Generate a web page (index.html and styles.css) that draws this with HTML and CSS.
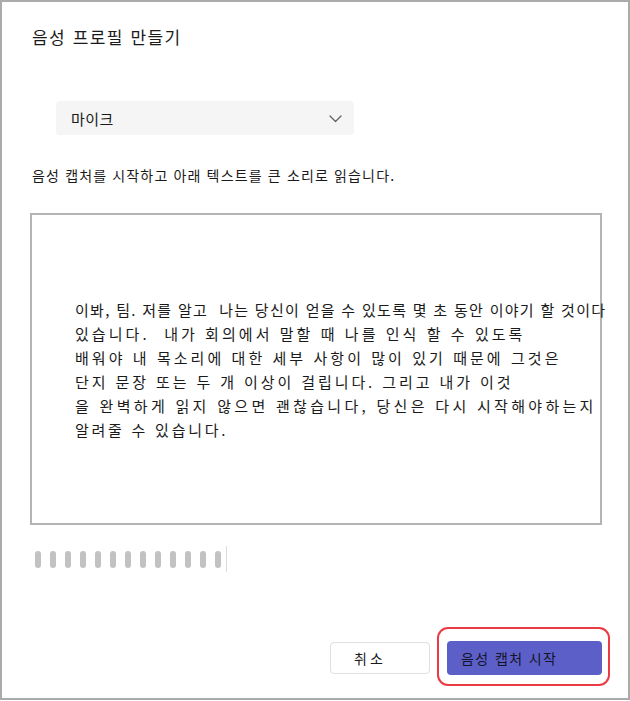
FILE: index.html
```html
<!DOCTYPE html>
<html lang="ko">
<head>
<meta charset="utf-8">
<title>음성 프로필 만들기</title>
<link rel="stylesheet" href="styles.css">
</head>
<body>
<div class="dialog">
  <h1 class="title">음성 프로필 만들기</h1>
  <div class="select">
    <span class="select-label">마이크</span>
    <svg class="chevron" width="13" height="8" viewBox="0 0 13 8"><path d="M1 1l5.5 5.5L12 1" fill="none" stroke="#616161" stroke-width="1.3" stroke-linecap="round" stroke-linejoin="round"/></svg>
  </div>
  <p class="instr">음성 캡처를 시작하고 아래 텍스트를 큰 소리로 읽습니다.</p>
  <div class="textbox">
    <div class="line line-1">이봐, 팀. 저를 알고&nbsp; 나는 당신이 얻을 수 있도록 몇 초 동안 이야기 할 것이다</div>
    <div class="line">있습니다.&nbsp; 내가 회의에서 말할 때 나를 인식 할 수 있도록</div>
    <div class="line">배워야 내 목소리에 대한 세부 사항이 많이 있기 때문에 그것은</div>
    <div class="line line-4">단지 문장 또는 두 개 이상이 걸립니다. 그리고 내가 이것</div>
    <div class="line line-5">을 완벽하게 읽지 않으면 괜찮습니다, 당신은 다시 시작해야하는지</div>
    <div class="line line-6">알려줄 수 있습니다.</div>
  </div>
  <div class="meter">
    <span class="bar"></span><span class="bar"></span><span class="bar"></span><span class="bar"></span><span class="bar"></span><span class="bar"></span><span class="bar"></span><span class="bar"></span><span class="bar"></span><span class="bar"></span><span class="bar"></span><span class="bar"></span><span class="bar"></span>
    <span class="cursor"></span>
  </div>
  <div class="footer">
    <button class="btn btn-cancel">취소</button>
    <div class="highlight">
      <button class="btn btn-primary">음성 캡처 시작</button>
    </div>
  </div>
</div>
</body>
</html>
```
FILE: styles.css
```css
* { box-sizing: border-box; }
html, body { margin: 0; padding: 0; background: #ffffff; }
body {
  font-family: "Noto Sans CJK KR", "Noto Sans", sans-serif;
  color: #1a1a1a;
}
.dialog {
  width: 630px;
  height: 700px;
  border: 2px solid #ababab;
  display: flex;
  flex-direction: column;
}
.title {
  margin: 23px 0 0 30px;
  height: 24px;
  line-height: 24px;
  font-size: 17px;
  font-weight: 400;
  letter-spacing: 1.27px;
  word-spacing: 1px;
}
.select {
  margin: 52px 0 0 54px;
  width: 298px;
  height: 34px;
  background: #f5f5f5;
  border-radius: 4px;
  display: flex;
  align-items: center;
  justify-content: space-between;
  padding: 0 12px 0 15px;
}
.select-label {
  font-size: 15px;
  letter-spacing: 0.5px;
}
.chevron { display: block; margin-top: 1px; }
.instr {
  margin: 30px 0 0 30px;
  height: 20px;
  line-height: 20px;
  font-size: 14px;
  letter-spacing: 1.15px;
}
.textbox {
  margin: 28px 0 0 28px;
  width: 572px;
  height: 312px;
  border: 2px solid #b4b4b4;
  padding: 83px 0 0 43px;
  overflow: visible;
}
.line {
  white-space: nowrap;
  height: 24px;
  line-height: 24px;
  font-size: 15px;
  letter-spacing: 3.05px;
}
.line-1 { letter-spacing: 1.3px; }
.line-4 { letter-spacing: 2.9px; }
.line-5 { letter-spacing: 3.3px; }
.line-6 { letter-spacing: 2.75px; }
.meter {
  margin: 21px 0 0 33px;
  height: 26px;
  display: flex;
  align-items: center;
  gap: 9px;
}
.bar {
  width: 6px;
  height: 17px;
  border-radius: 3px;
  background: #c2c2c2;
}
.cursor {
  width: 1px;
  height: 26px;
  background: #dcdcdc;
  margin-left: -4px;
}
.footer {
  margin-top: 55px;
  display: flex;
  justify-content: flex-end;
  align-items: flex-start;
  padding-right: 18px;
  gap: 7px;
}
.btn {
  font-family: inherit;
  font-size: 14px;
  border-radius: 4px;
  cursor: pointer;
  color: #1a1a1a;
}
.btn-cancel {
  margin-top: 15px;
  width: 100px;
  height: 32px;
  background: #ffffff;
  border: 1px solid #e0e0e0;
  letter-spacing: 3px;
  padding: 0 20px 0 0;
}
.highlight {
  border: 2px solid #ec3a44;
  border-radius: 11px;
  padding: 12px 6px 9px 8px;
}
.btn-primary {
  display: block;
  width: 155px;
  height: 34px;
  background: #5b5fc7;
  border: none;
  text-align: left;
  padding: 0 0 0 14px;
  letter-spacing: 1.4px;
  color: #141428;
}
```
